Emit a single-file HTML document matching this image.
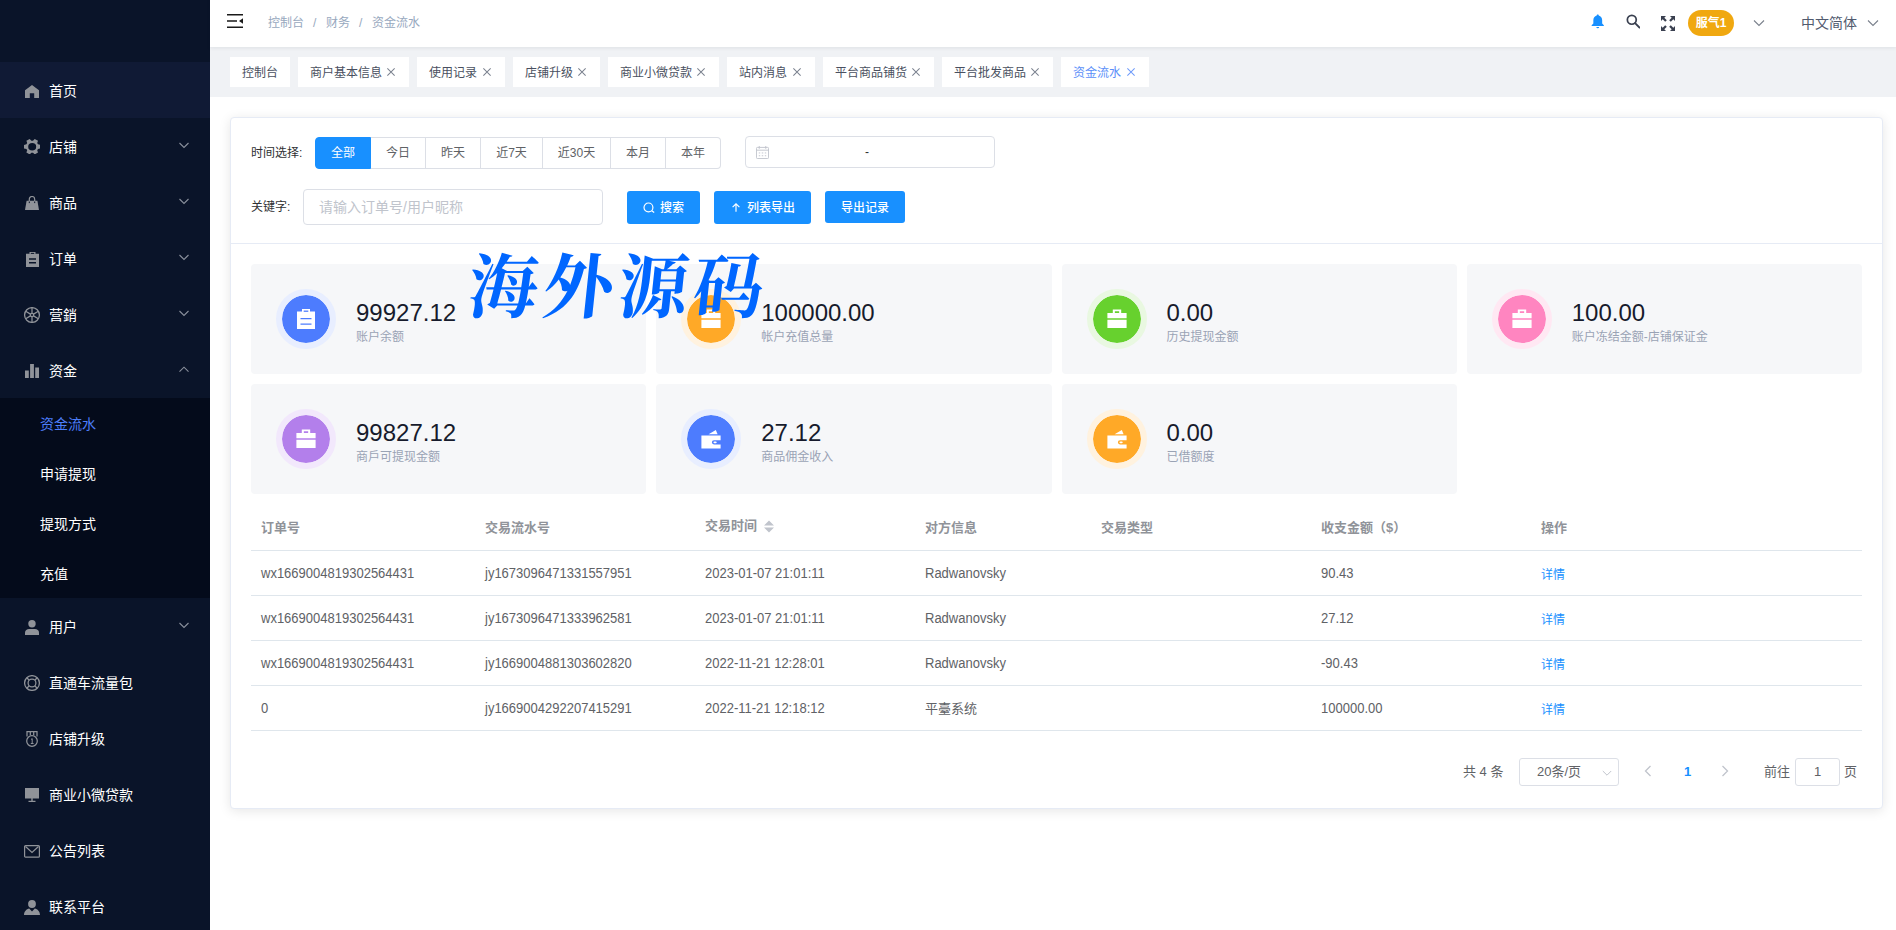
<!DOCTYPE html>
<html lang="zh-CN">
<head>
<meta charset="utf-8">
<title>资金流水</title>
<style>
*{box-sizing:border-box;margin:0;padding:0}
html,body{width:1896px;height:930px;overflow:hidden;background:#fff}
body{font-family:"Liberation Sans","Noto Sans CJK SC",sans-serif;font-size:12px;color:#606266;position:relative}
.abs{position:absolute}
/* sidebar */
#side{position:absolute;left:0;top:0;width:210px;height:930px;background:#0a1429;overflow:hidden}
.mi{position:absolute;left:0;width:210px;height:56px;color:#fff;font-size:14px;line-height:56px}
.mi .t{position:absolute;left:49px;top:1px;white-space:nowrap}
.mi svg.ic{position:absolute;left:23px;top:19px;width:18px;height:18px}
.mi svg.ar{position:absolute;left:178px;top:21px;width:12px;height:12px}
.mi.act{background:#101a35}
#sub{position:absolute;left:0;top:398px;width:210px;height:200px;background:#040b1b}
.si{position:absolute;left:40px;height:50px;line-height:52.500px;font-size:14px;color:#fff;white-space:nowrap}
/* header */
#hdr{position:absolute;left:210px;top:0;width:1686px;height:47px;background:#fff;box-shadow:0 1px 4px rgba(0,21,41,.08);z-index:2}
#tabs{position:absolute;left:210px;top:47px;width:1686px;height:50px;background:#f0f2f5}
.tab{position:absolute;top:10px;height:30px;line-height:32px;background:#fff;color:#495060;font-size:12px;padding-left:12px;white-space:nowrap}
.tab .x{position:absolute;right:14.500px;top:10.800px;width:8px;height:8px}
.tab.on{color:#5b8ff9}
.bc{position:absolute;top:0;height:47px;line-height:47px;font-size:12px;color:#97a8be;white-space:nowrap}
/* card */
#card{position:absolute;left:230px;top:117px;width:1653px;height:692px;background:#fff;border:1px solid #e6ebf5;border-radius:4px;box-shadow:0 2px 12px 0 rgba(0,0,0,.1)}
.lbl{position:absolute;font-size:12px;color:#303133;white-space:nowrap}
.rb{position:absolute;top:137px;height:32px;line-height:31px;border:1px solid #dcdfe6;border-left:0;background:#fff;color:#606266;font-size:12px;text-align:center}
.btn{position:absolute;top:191px;height:33px;background:#1890ff;border-radius:3px;color:#fff;font-size:12px;white-space:nowrap}
.stat{position:absolute;width:395.25px;height:110px;background:#f6f7f9;border-radius:4px}
.stat .c{position:absolute;left:25px;top:25px;width:60px;height:60px;border-radius:50%;border:6px solid;background-clip:padding-box}
.stat .c svg{position:absolute;left:12px;top:12px;width:24px;height:24px}
.stat .n{position:absolute;left:105px;top:34.200px;font-size:24px;line-height:30px;color:#171b2c;white-space:nowrap}
.stat .d{position:absolute;left:105px;top:65px;font-size:12px;line-height:16px;color:#9aa3b5;white-space:nowrap}
.th{position:absolute;top:505px;height:45px;line-height:45px;font-size:13px;font-weight:bold;color:#909399;white-space:nowrap}
.td{position:absolute;height:45px;line-height:45px;font-size:13px;color:#606266;white-space:nowrap}
.hl{position:absolute;left:251px;width:1611px;height:1px;background:#dfe6ec}
.lk{color:#1890ff}
.pg{position:absolute;font-size:13px;color:#606266;white-space:nowrap;line-height:28px;top:758px;height:28px}
#wm{font-family:"Noto Serif CJK SC","Noto Sans CJK SC",serif;font-weight:700;font-size:70px;line-height:80px;color:#0066ff;white-space:nowrap;letter-spacing:5px;transform:skewX(-6deg);transform-origin:0 100%;z-index:5}
.bt{top:1.300px;line-height:33px;font-weight:500}
.nar{font-size:14px;transform:scaleX(.9286);transform-origin:0 50%}
</style>
</head>
<body>
<div id="side">
<div class="mi act" style="top:62px"><svg class="ic" style="left:25px;top:23px;width:14px;height:13px" viewBox="0 0 14 13"><path d="M7 0 L14 5.2 V13 H9.2 V8.2 H4.8 V13 H0 V5.2 Z" fill="#909399"/></svg><span class="t">首页</span></div>
<div class="mi" style="top:118px"><svg class="ic" style="left:24px;top:21px;width:16.4px;height:15.4px" viewBox="1.6 0.8 14.4 14.4" preserveAspectRatio="none"><path transform="rotate(90 8 8)" fill-rule="evenodd" fill="#909399" d="M6.3 0h3.4l.5 2.1 1.2.7 2.1-.7 1.7 2.9-1.6 1.500v1.400l1.600 1.500-1.700 2.900-2.100-.7-1.200.7-.5 2.100H6.300l-.5-2.100-1.200-.7-2.100.7L.8 9.400l1.600-1.500V6.500L.8 5l1.700-2.900 2.100.7 1.200-.7zM8 3.700a3.500 3.500 0 100 7 3.500 3.500 0 000-7z"/></svg><span class="t">店铺</span><svg class="ar" viewBox="0 0 12 12"><path d="M1.5 4 L6 8.5 L10.5 4" fill="none" stroke="#8a909c" stroke-width="1.1"/></svg></div>
<div class="mi" style="top:174px"><svg class="ic" style="left:25px;top:22px;width:14px;height:14px" viewBox="0 0 14 14"><path d="M1.600 4.800H12.400L14 14H0Z" fill="#909399"/><path d="M4.300 6.500V3.200a2.700 2.700 0 015.400 0V6.500" fill="none" stroke="#909399" stroke-width="1.200"/><path d="M4.300 5.500v1.600M9.700 5.500v1.600" stroke="#0a1429" stroke-width="1"/></svg><span class="t">商品</span><svg class="ar" viewBox="0 0 12 12"><path d="M1.5 4 L6 8.5 L10.5 4" fill="none" stroke="#8a909c" stroke-width="1.1"/></svg></div>
<div class="mi" style="top:230px"><svg class="ic" style="left:26px;top:22px;width:13px;height:15px" viewBox="0 0 13 15"><path fill-rule="evenodd" fill="#909399" d="M0 1.800H3.500V0H9.500V1.800H13V15H0ZM3 6.200H10V7.700H3ZM3 10H10V11.500H3Z"/><path d="M4.800 1.400h3.400" stroke="#0a1429" stroke-width="1"/></svg><span class="t">订单</span><svg class="ar" viewBox="0 0 12 12"><path d="M1.5 4 L6 8.5 L10.5 4" fill="none" stroke="#8a909c" stroke-width="1.1"/></svg></div>
<div class="mi" style="top:286px"><svg class="ic" style="left:24px;top:21px;width:16px;height:16px" viewBox="0 0 16 16"><g fill="none" stroke="#909399" stroke-width="1.250"><circle cx="8" cy="8" r="7.400"/><circle cx="8" cy="8" r="1.700"/><path d="M8 .6V6.300M8 9.700V15.400M1.600 4.300L6.500 7.150M9.500 8.850L14.400 11.700M1.600 11.700L6.500 8.850M9.500 7.150L14.400 4.300"/></g></svg><span class="t">营銷</span><svg class="ar" viewBox="0 0 12 12"><path d="M1.5 4 L6 8.5 L10.5 4" fill="none" stroke="#8a909c" stroke-width="1.1"/></svg></div>
<div class="mi" style="top:342px"><svg class="ic" style="left:25px;top:22px;width:14px;height:14px" viewBox="0 0 14 14"><path d="M0 6.500H3.800V14H0ZM5.100 0H8.900V14H5.100ZM10.200 3.500H14V14H10.200Z" fill="#909399"/></svg><span class="t">资金</span><svg class="ar" viewBox="0 0 12 12"><path d="M1.5 8.7 L6 4.2 L10.5 8.7" fill="none" stroke="#8a909c" stroke-width="1.1"/></svg></div>
<div class="mi" style="top:598px"><svg class="ic" style="left:25px;top:22px;width:14px;height:15px" viewBox="0 0 14 15"><circle cx="7" cy="3.800" r="3.700" fill="#909399"/><path d="M0 15V12.600C0 10.200 2 9 4 9H10C12 9 14 10.200 14 12.600V15Z" fill="#909399"/></svg><span class="t">用户</span><svg class="ar" viewBox="0 0 12 12"><path d="M1.5 4 L6 8.5 L10.5 4" fill="none" stroke="#8a909c" stroke-width="1.1"/></svg></div>
<div class="mi" style="top:654px"><svg class="ic" style="left:24px;top:21px;width:16px;height:16px" viewBox="0 0 16 16"><g fill="none" stroke="#909399" stroke-width="1.250"><circle cx="8" cy="8" r="7.400"/><circle cx="8" cy="8" r="3.900"/><path d="M2.800 2.800L5.250 5.250M13.200 2.800L10.750 5.250M2.800 13.200L5.250 10.750M13.200 13.200L10.750 10.750"/></g></svg><span class="t">直通车流量包</span></div>
<div class="mi" style="top:710px"><svg class="ic" style="left:26px;top:21px;width:12px;height:16px" viewBox="0 0 12 16"><g fill="none" stroke="#909399" stroke-width="1.250"><path d="M1 5.500V.6H11V5.500M4.300 .6V4.200M7.700 .6V4.200"/><circle cx="6" cy="10" r="5.300"/><path d="M5 8.500L6.200 7.600V12.400M4.800 12.500H7.600" stroke-width="1"/></g></svg><span class="t">店铺升级</span></div>
<div class="mi" style="top:766px"><svg class="ic" style="left:25px;top:22px;width:14px;height:14px" viewBox="0 0 14 14"><path d="M0 0H14V10.500H0ZM6.300 10.500H7.700V12.700H10.500V14H3.500V12.700H6.300Z" fill="#909399"/></svg><span class="t">商业小微贷款</span></div>
<div class="mi" style="top:822px"><svg class="ic" style="left:24px;top:23px;width:16px;height:13px" viewBox="0 0 16 13"><g fill="none" stroke="#909399" stroke-width="1.200"><rect x=".6" y=".6" width="14.800" height="11.600" rx="1"/><path d="M1.500 1.500L8 7.500L14.500 1.500"/></g></svg><span class="t">公告列表</span></div>
<div class="mi" style="top:878px"><svg class="ic" style="left:24px;top:22px;width:16px;height:15px" viewBox="0 0 16 15"><circle cx="8" cy="4" r="3.900" fill="#909399"/><path d="M0 15C0 11.500 2.500 9 5.200 8.500L8 11.500L10.800 8.500C13.500 9 16 11.500 16 15Z" fill="#909399"/></svg><span class="t">联系平台</span></div>
<div id="sub">
<div class="si" style="top:0px;color:#4d7efa">资金流水</div>
<div class="si" style="top:50px">申请提现</div>
<div class="si" style="top:100px">提现方式</div>
<div class="si" style="top:150px">充值</div>
</div>
</div>
<div id="hdr">
<svg class="abs" style="left:17px;top:14px;width:16px;height:14px" viewBox="0 0 16 14"><path d="M0 0H16V1.500H0ZM0 6.200H10V7.700H0ZM0 12.500H16V14H0Z" fill="#1a1a1a"/><path d="M16 4.300V9.700L12 7Z" fill="#1a1a1a"/></svg>
<span class="bc" style="left:58px">控制台</span><span class="bc" style="left:103px">/</span><span class="bc" style="left:116px">财务</span><span class="bc" style="left:149px">/</span><span class="bc" style="left:162px">资金流水</span>
<svg class="abs" style="left:1380.700px;top:14px;width:13.500px;height:15px" viewBox="0 0 14 16"><path d="M7 0.500C7.700 .5 8.100 1 8.100 1.600C10.400 2.200 11.700 4.100 11.700 6.500V10L13.500 12V12.800H.5V12L2.300 10V6.500C2.300 4.100 3.600 2.200 5.900 1.600C5.900 1 6.300 .5 7 .5ZM5.500 13.800H8.500A1.500 1.500 0 015.500 13.800Z" fill="#1890ff"/></svg>
<svg class="abs" style="left:1415.500px;top:14.300px;width:14.500px;height:14.500px" viewBox="0 0 15 15"><circle cx="6" cy="6" r="4.600" fill="none" stroke="#3a4050" stroke-width="1.800"/><path d="M9.400 9.400L14 14" stroke="#3a4050" stroke-width="2" stroke-linecap="round"/></svg>
<svg class="abs" style="left:1451px;top:16px;width:14px;height:15px" viewBox="0 0 14 15"><g fill="#3a4050"><path d="M0 0H5L3.300 1.700L5.800 4.200L4.200 5.800L1.700 3.300L0 5Z"/><path d="M14 0V5L12.300 3.300L9.800 5.800L8.200 4.200L10.700 1.700L9 0Z"/><path d="M0 15V10L1.700 11.700L4.200 9.200L5.800 10.800L3.300 13.300L5 15Z"/><path d="M14 15H9L10.700 13.300L8.200 10.800L9.800 9.200L12.300 11.700L14 10Z"/></g></svg>
<div class="abs" style="left:1478px;top:10px;width:46px;height:26px;border-radius:13px;background:#f0a810;color:#fff;font-size:12px;font-weight:bold;line-height:26px;text-align:center;white-space:nowrap">服气1</div>
<svg class="abs" style="left:1543px;top:17px;width:12px;height:12px" viewBox="0 0 12 12"><path d="M1 3.500L6 8.500L11 3.500" fill="none" stroke="#7a808c" stroke-width="1.100"/></svg>
<span class="abs" style="left:1591px;top:0;height:47px;line-height:46px;font-size:14px;color:#515a6e;white-space:nowrap">中文简体</span>
<svg class="abs" style="left:1657px;top:17px;width:12px;height:12px" viewBox="0 0 12 12"><path d="M1 3.500L6 8.500L11 3.500" fill="none" stroke="#7a808c" stroke-width="1.100"/></svg>
</div>
<div id="tabs">
<div class="tab" style="left:20px;width:60px">控制台</div>
<div class="tab" style="left:88px;width:111px">商户基本信息<svg class="x" viewBox="0 0 7 7"><path d="M.3 .3L6.700 6.700M6.700 .3L.3 6.700" stroke="#7b828f" stroke-width=".9" fill="none"/></svg></div>
<div class="tab" style="left:207px;width:88px">使用记录<svg class="x" viewBox="0 0 7 7"><path d="M.3 .3L6.700 6.700M6.700 .3L.3 6.700" stroke="#7b828f" stroke-width=".9" fill="none"/></svg></div>
<div class="tab" style="left:303px;width:87px">店铺升级<svg class="x" viewBox="0 0 7 7"><path d="M.3 .3L6.700 6.700M6.700 .3L.3 6.700" stroke="#7b828f" stroke-width=".9" fill="none"/></svg></div>
<div class="tab" style="left:398px;width:111px">商业小微贷款<svg class="x" viewBox="0 0 7 7"><path d="M.3 .3L6.700 6.700M6.700 .3L.3 6.700" stroke="#7b828f" stroke-width=".9" fill="none"/></svg></div>
<div class="tab" style="left:517px;width:88px">站内消息<svg class="x" viewBox="0 0 7 7"><path d="M.3 .3L6.700 6.700M6.700 .3L.3 6.700" stroke="#7b828f" stroke-width=".9" fill="none"/></svg></div>
<div class="tab" style="left:613px;width:111px">平台商品铺货<svg class="x" viewBox="0 0 7 7"><path d="M.3 .3L6.700 6.700M6.700 .3L.3 6.700" stroke="#7b828f" stroke-width=".9" fill="none"/></svg></div>
<div class="tab" style="left:732px;width:111px">平台批发商品<svg class="x" viewBox="0 0 7 7"><path d="M.3 .3L6.700 6.700M6.700 .3L.3 6.700" stroke="#7b828f" stroke-width=".9" fill="none"/></svg></div>
<div class="tab on" style="left:851px;width:88px">资金流水<svg class="x" viewBox="0 0 7 7"><path d="M.3 .3L6.700 6.700M6.700 .3L.3 6.700" stroke="#6f9bfa" stroke-width=".9" fill="none"/></svg></div>
</div>
<div id="card">
<div class="lbl" style="left:20px;top:19px;height:32px;line-height:33px">时间选择:</div>
<div class="rb" style="left:84px;top:19px;width:56px;background:#1890ff;border-color:#1890ff;color:#fff;border-left:1px solid #1890ff;border-radius:4px 0 0 4px;">全部</div>
<div class="rb" style="left:140px;top:19px;width:55px;">今日</div>
<div class="rb" style="left:195px;top:19px;width:55px;">昨天</div>
<div class="rb" style="left:250px;top:19px;width:62px;">近7天</div>
<div class="rb" style="left:312px;top:19px;width:68px;">近30天</div>
<div class="rb" style="left:380px;top:19px;width:55px;">本月</div>
<div class="rb" style="left:435px;top:19px;width:55px;border-radius:0 4px 4px 0;">本年</div>
<div class="abs" style="left:514px;top:18px;width:250px;height:32px;border:1px solid #dcdfe6;border-radius:4px;background:#fff"><svg class="abs" style="left:10px;top:8.500px;width:13px;height:13px" viewBox="0 0 14 14"><g fill="none" stroke="#c0c4cc" stroke-width="1"><rect x=".5" y="1.500" width="13" height="12" rx="1"/><path d="M.5 4.500H13.500M3.500 0V3M10.500 0V3M3 7.500H4.500M6.200 7.500H7.800M9.500 7.500H11M3 10.500H4.500M6.200 10.500H7.800M9.500 10.500H11"/></g></svg><span class="abs" style="left:119px;top:0;line-height:30px;font-size:12px;color:#303133">-</span></div>
<div class="lbl" style="left:20px;top:71px;height:36px;line-height:37px">关键字:</div>
<div class="abs" style="left:72px;top:71px;width:300px;height:36px;border:1px solid #dcdfe6;border-radius:4px;background:#fff;padding-left:15px;line-height:34px;font-size:14px;color:#c0c4cc;white-space:nowrap">请输入订单号/用户昵称</div>
<div class="btn" style="left:396px;top:73px;width:73px"><svg class="abs" style="left:16px;top:11px;width:12px;height:12px" viewBox="0 0 12 12"><circle cx="5.450" cy="5.450" r="4.450" fill="none" stroke="#fff" stroke-width="1.200"/><path d="M8.700 8.700L11.200 10.600" stroke="#fff" stroke-width="1.200"/></svg><span class="abs bt" style="left:33px">搜索</span></div>
<div class="btn" style="left:483px;top:73px;width:97px"><svg class="abs" style="left:18px;top:11.700px;width:8px;height:9px" viewBox="0 0 8 9"><path d="M4 8.700V1M.6 4.200L4 .8L7.400 4.200" fill="none" stroke="#fff" stroke-width="1.150"/></svg><span class="abs bt" style="left:33px">列表导出</span></div>
<div class="btn" style="left:594px;top:73px;width:80px;height:32px"><span class="abs bt" style="left:16px;line-height:32px">导出记录</span></div>
<div class="abs" style="left:0;top:125px;width:1651px;height:1px;background:#e6ebf5"></div>
<div class="stat" style="left:20px;top:146px"><div class="c" style="background-color:#4d7cfe;border-color:#e8eeff"><svg viewBox="0 0 20 20"><g transform="scale(.8333)"><path fill-rule="evenodd" fill="#fff" d="M3 4.500H8V2H16V4.500H21V22H3ZM6.500 11H17.500V12.300H6.500ZM6.500 16.500H17.500V17.800H6.500Z"/><path d="M9.700 4.200h4.600" stroke="#4d7cfe" stroke-width="1.300"/></g></svg></div><div class="n">99927.12</div><div class="d">账户余额</div></div>
<div class="stat" style="left:425.25px;top:146px"><div class="c" style="background-color:#ffa927;border-color:#fff2df"><svg viewBox="0 0 20 20"><path fill="#fff" d="M6.500 2H13.500V5H18V9.300H2V5H6.500ZM8.200 3.600V5H11.800V3.600ZM2 10.700H18V17.500H2Z"/></svg></div><div class="n">100000.00</div><div class="d">帐户充值总量</div></div>
<div class="stat" style="left:830.5px;top:146px"><div class="c" style="background-color:#67d12e;border-color:#e9f8e1"><svg viewBox="0 0 20 20"><path fill="#fff" d="M6.500 2H13.500V5H18V9.300H2V5H6.500ZM8.200 3.600V5H11.800V3.600ZM2 10.700H18V17.500H2Z"/></svg></div><div class="n">0.00</div><div class="d">历史提现金额</div></div>
<div class="stat" style="left:1235.75px;top:146px"><div class="c" style="background-color:#ff85c0;border-color:#ffe8f3"><svg viewBox="0 0 20 20"><path fill="#fff" d="M6.500 2H13.500V5H18V9.300H2V5H6.500ZM8.200 3.600V5H11.800V3.600ZM2 10.700H18V17.500H2Z"/></svg></div><div class="n">100.00</div><div class="d">账户冻结金额-店铺保证金</div></div>
<div class="stat" style="left:20px;top:266px"><div class="c" style="background-color:#b37feb;border-color:#f2e8fc"><svg viewBox="0 0 20 20"><path fill="#fff" d="M6.500 2H13.500V5H18V9.300H2V5H6.500ZM8.200 3.600V5H11.800V3.600ZM2 10.700H18V17.500H2Z"/></svg></div><div class="n">99827.12</div><div class="d">商戶可提现金额</div></div>
<div class="stat" style="left:425.25px;top:266px"><div class="c" style="background-color:#4d7cfe;border-color:#e8eeff"><svg viewBox="0 0 20 20"><path fill-rule="evenodd" fill="#fff" d="M2 7H18V18H2ZM12.500 11H18V14.500H12.500A1.750 1.750 0 0112.500 11ZM12.800 12A.75 .75 0 0012.800 13.500H14A.75 .75 0 0014 12Z"/><path fill="#fff" d="M8 6L14 2.500L15.500 6Z"/></svg></div><div class="n">27.12</div><div class="d">商品佣金收入</div></div>
<div class="stat" style="left:830.5px;top:266px"><div class="c" style="background-color:#ffa927;border-color:#fff2df"><svg viewBox="0 0 20 20"><path fill-rule="evenodd" fill="#fff" d="M2 7H18V18H2ZM12.500 11H18V14.500H12.500A1.750 1.750 0 0112.500 11ZM12.800 12A.75 .75 0 0012.800 13.500H14A.75 .75 0 0014 12Z"/><path fill="#fff" d="M8 6L14 2.500L15.500 6Z"/></svg></div><div class="n">0.00</div><div class="d">已借额度</div></div>
<div class="abs" id="wm" style="left:234px;top:124px">海外源码</div>
<div class="th" style="left:30px;top:387px">订单号</div>
<div class="th" style="left:254px;top:387px">交易流水号</div>
<div class="th" style="left:474px;top:385px">交易时间<svg style="position:absolute;left:59px;top:16.500px;width:10px;height:13px" viewBox="0 0 8 12" preserveAspectRatio="none"><path d="M0 5L4 .5L8 5ZM0 7L4 11.500L8 7Z" fill="#c0c4cc"/></svg></div>
<div class="th" style="left:694px;top:387px">对方信息</div>
<div class="th" style="left:870px;top:387px">交易类型</div>
<div class="th" style="left:1090px;top:387px">收支金额（$）</div>
<div class="th" style="left:1310px;top:387px">操作</div>
<div class="hl" style="left:20px;top:432px"></div>
<div class="hl" style="left:20px;top:477px"></div>
<div class="hl" style="left:20px;top:522px"></div>
<div class="hl" style="left:20px;top:567px"></div>
<div class="hl" style="left:20px;top:612px"></div>
<div class="td nar" style="left:30px;top:433px">wx1669004819302564431</div>
<div class="td nar" style="left:254px;top:433px">jy1673096471331557951</div>
<div class="td nar" style="left:474px;top:433px">2023-01-07 21:01:11</div>
<div class="td nar" style="left:694px;top:433px">Radwanovsky</div>
<div class="td nar" style="left:1090px;top:433px">90.43</div>
<div class="td lk" style="left:1310px;top:434.5px;font-size:12px">详情</div>
<div class="td nar" style="left:30px;top:478px">wx1669004819302564431</div>
<div class="td nar" style="left:254px;top:478px">jy1673096471333962581</div>
<div class="td nar" style="left:474px;top:478px">2023-01-07 21:01:11</div>
<div class="td nar" style="left:694px;top:478px">Radwanovsky</div>
<div class="td nar" style="left:1090px;top:478px">27.12</div>
<div class="td lk" style="left:1310px;top:479.5px;font-size:12px">详情</div>
<div class="td nar" style="left:30px;top:523px">wx1669004819302564431</div>
<div class="td nar" style="left:254px;top:523px">jy1669004881303602820</div>
<div class="td nar" style="left:474px;top:523px">2022-11-21 12:28:01</div>
<div class="td nar" style="left:694px;top:523px">Radwanovsky</div>
<div class="td nar" style="left:1090px;top:523px">-90.43</div>
<div class="td lk" style="left:1310px;top:524.5px;font-size:12px">详情</div>
<div class="td nar" style="left:30px;top:568px">0</div>
<div class="td nar" style="left:254px;top:568px">jy1669004292207415291</div>
<div class="td nar" style="left:474px;top:568px">2022-11-21 12:18:12</div>
<div class="td" style="left:694px;top:568px">平臺系统</div>
<div class="td nar" style="left:1090px;top:568px">100000.00</div>
<div class="td lk" style="left:1310px;top:569.5px;font-size:12px">详情</div>
<div class="pg" style="left:1232px;top:640px;">共 4 条</div>
<div class="abs" style="left:1288px;top:640px;width:100px;height:28px;border:1px solid #dcdfe6;border-radius:3px;background:#fff"><span class="abs" style="left:17px;top:0;line-height:26px;font-size:13px;color:#606266;white-space:nowrap">20条/页</span><svg class="abs" style="left:82px;top:9px;width:10px;height:10px" viewBox="0 0 10 10"><path d="M.8 3L5 7.200L9.200 3" fill="none" stroke="#c0c4cc" stroke-width="1"/></svg></div>
<svg class="abs" style="left:1413px;top:647px;width:8px;height:12px" viewBox="0 0 8 12"><path d="M6.500 1L1.500 6L6.500 11" fill="none" stroke="#c0c4cc" stroke-width="1.300"/></svg>
<div class="pg" style="left:1453px;top:640px;color:#1890ff;font-weight:bold">1</div>
<svg class="abs" style="left:1490px;top:647px;width:8px;height:12px" viewBox="0 0 8 12"><path d="M1.500 1L6.500 6L1.500 11" fill="none" stroke="#c0c4cc" stroke-width="1.300"/></svg>
<div class="pg" style="left:1533px;top:640px;">前往</div>
<div class="abs" style="left:1564px;top:640px;width:45px;height:28px;border:1px solid #dcdfe6;border-radius:3px;background:#fff;text-align:center;line-height:26px;font-size:13px;color:#606266">1</div>
<div class="pg" style="left:1613px;top:640px;">页</div>
</div>
</body>
</html>
